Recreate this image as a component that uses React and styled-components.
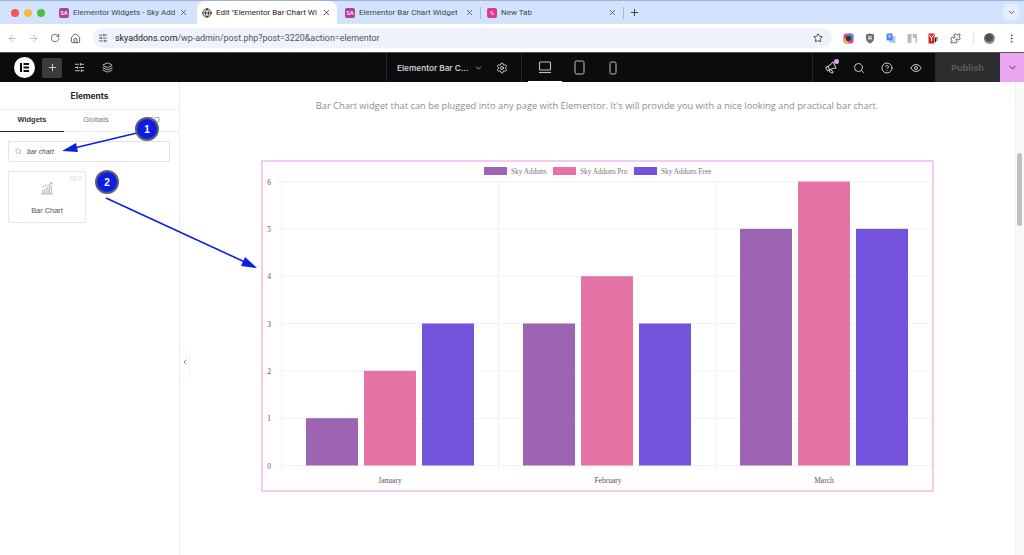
import React from "react";
import styled, { createGlobalStyle } from "styled-components";
import {
  ArrowLeft, ArrowRight, RotateCw, House, SlidersHorizontal, Star, Puzzle, EllipsisVertical, Plus, X,
  ChevronDown, Settings, Megaphone, Search, CircleHelp, Eye, Layers,
  ChevronLeft, Globe,
} from "lucide-react";

const Global = createGlobalStyle`
  html, body { margin: 0; padding: 0; background: #fff; overflow: hidden; }
  * { box-sizing: border-box; }
  #root { width: 1024px; height: 555px; }
`;

const Page = styled.div`
  position: relative;
  width: 1024px;
  height: 555px;
  overflow: hidden;
  display: flex;
  flex-direction: column;
  font-family: "Liberation Sans", Arial, sans-serif;
  background: #fff;
`;

/* ---------- browser chrome ---------- */
const TabStrip = styled.div`
  height: 24px;
  flex: none;
  display: flex;
  align-items: stretch;
  background: #d3e3fd;
  border-top: 1px solid #9fb2df;
`;
const Lights = styled.div`
  width: 53px;
  padding-left: 11px;
  display: flex;
  align-items: center;
  gap: 5px;
  flex: none;
`;
const Light = styled.span`
  width: 8px;
  height: 8px;
  border-radius: 50%;
  background: ${(p) => p.$c};
`;
const Tab = styled.div`
  width: ${(p) => p.$w}px;
  flex: none;
  display: flex;
  align-items: center;
  padding: 0 ${(p) => p.$pr || 6}px 0 ${(p) => p.$pl}px;
  gap: 4px;
  font-family: Roboto, "Liberation Sans", sans-serif;
  font-size: 8px;
  color: ${(p) => (p.$active ? "#222" : "#3f4651")};
  background: ${(p) => (p.$active ? "#fff" : "transparent")};
  border-radius: 8px 8px 0 0;
  white-space: nowrap;
`;
const TabLabel = styled.span`
  flex: 1;
  min-width: 0;
`;
const Favicon = styled.span`
  width: 10px;
  height: 10px;
  flex: none;
  border-radius: 2px;
  background: ${(p) => p.$bg};
  color: #f6d8ee;
  font-size: 6px;
  font-weight: 700;
  line-height: 10px;
  text-align: center;
`;
const TabDivider = styled.span`
  width: 1px;
  height: 12px;
  align-self: center;
  background: #a9b8d4;
  flex: none;
`;
const NewTab = styled.div`
  width: 20px;
  flex: none;
  display: flex;
  align-items: center;
  justify-content: center;
  color: #333;
`;
const StripSpacer = styled.div`
  flex: 1;
`;
const TabMenu = styled.div`
  width: 16px;
  height: 16px;
  margin: 3px 5px 0 0;
  border-radius: 5px;
  background: #e6eefc;
  display: flex;
  align-items: center;
  justify-content: center;
  color: #333;
`;
const Toolbar = styled.div`
  height: 28px;
  flex: none;
  display: flex;
  align-items: center;
  background: #fff;
  padding-left: 2px;
  color: #5f6368;
`;
const NavBtn = styled.span`
  width: ${(p) => p.$w || 21}px;
  flex: none;
  display: flex;
  align-items: center;
  justify-content: center;
  color: ${(p) => p.$c || "#555"};
`;
const Omnibox = styled.div`
  margin-left: 7px;
  width: 739px;
  height: 20px;
  flex: none;
  border-radius: 10px;
  background: #eef2fa;
  display: flex;
  align-items: center;
  padding: 0 9px 0 5px;
  gap: 7px;
  font-family: Roboto, "Liberation Sans", sans-serif;
  font-size: 8.9px;
  color: #50555c;
`;
const Domain = styled.span`
  color: #1f2226;
`;
const Url = styled.span`
  flex: 1;
`;
const Ext = styled.span`
  width: 21.3px;
  flex: none;
  display: flex;
  align-items: center;
  justify-content: center;
`;
const ToolDivider = styled.span`
  width: 1px;
  height: 11px;
  background: #dfe2e6;
  margin: 0 10px 0 7px;
  flex: none;
`;
const Avatar = styled.span`
  width: 11px;
  height: 11px;
  border-radius: 50%;
  background: radial-gradient(circle at 45% 40%, #4b4f4e 0 35%, #a3a6a5 70%);
  margin-right: 4px;
  flex: none;
`;

/* ---------- elementor bar ---------- */
const EditorBar = styled.div`
  height: 30px;
  flex: none;
  display: flex;
  align-items: stretch;
  background: #0b0c0d;
  border-top: 1px solid #555;
  color: #c9cbce;
`;
const BarLeft = styled.div`
  width: 386px;
  flex: none;
  display: flex;
  align-items: center;
  padding-left: 14px;
`;
const Logo = styled.span`
  width: 21px;
  height: 21px;
  border-radius: 50%;
  background: #fff;
  display: flex;
  align-items: center;
  justify-content: center;
  margin-right: 7px;
  flex: none;
`;
const AddBtn = styled.span`
  width: 20px;
  height: 20px;
  border-radius: 2px;
  background: #3a3b3d;
  display: flex;
  align-items: center;
  justify-content: center;
  color: #d5d6d8;
  margin-right: 7px;
`;
const BarIcon = styled.span`
  width: ${(p) => p.$w}px;
  flex: none;
  height: 100%;
  position: relative;
  display: flex;
  align-items: center;
  justify-content: center;
  color: ${(p) => p.$c || "#c9cbce"};
`;
const Tilted = styled.span`
  display: flex;
  transform: rotate(-28deg);
`;
const TitleGroup = styled.div`
  width: 136px;
  flex: none;
  display: flex;
  align-items: center;
  padding-left: 10px;
  border-left: 1px solid #26272a;
  border-right: 1px solid #26272a;
  font-family: Inter, "Liberation Sans", sans-serif;
  font-size: 8.2px;
  font-weight: 600;
  color: #c8cacc;
`;
const TitleText = styled.span`
  width: 77px;
  white-space: nowrap;
  flex: none;
`;
const Devices = styled.div`
  width: 290px;
  flex: none;
  display: flex;
  align-items: stretch;
  padding-left: 6px;
`;
const DeviceBtn = styled.span`
  width: 34px;
  flex: none;
  display: flex;
  align-items: center;
  justify-content: center;
  color: #c0c2c5;
  box-shadow: ${(p) => (p.$active ? "inset 0 -1px 0 #fff" : "none")};
`;
const BarRight = styled.div`
  flex: 1;
  display: flex;
  align-items: stretch;
  border-left: 1px solid #26272a;
  padding-left: 3px;
`;
const Dot = styled.span`
  position: absolute;
  top: 6px;
  right: 6px;
  width: 5px;
  height: 5px;
  border-radius: 50%;
  background: #e7a6ee;
`;
const Publish = styled.span`
  width: 65px;
  flex: none;
  margin-left: 5px;
  background: #2b2c2d;
  color: #5b5d5f;
  font-size: 9px;
  font-weight: 700;
  display: flex;
  align-items: center;
  justify-content: center;
`;
const PublishMenu = styled.span`
  flex: 1;
  background: #e9a6f1;
  color: #4a2a50;
  display: flex;
  align-items: center;
  justify-content: center;
`;

/* ---------- workspace ---------- */
const Workspace = styled.div`
  flex: 1;
  min-height: 0;
  display: flex;
`;
const Sidebar = styled.aside`
  width: 180px;
  flex: none;
  border-right: 1px solid #eceded;
  display: flex;
  flex-direction: column;
`;
const PanelTitle = styled.div`
  height: 28px;
  flex: none;
  display: flex;
  align-items: center;
  justify-content: center;
  font-family: Inter, "Liberation Sans", sans-serif;
  font-size: 8.4px;
  font-weight: 700;
  color: #25272a;
  border-bottom: 1px solid #f0f0f1;
`;
const PanelTabs = styled.div`
  height: 22px;
  flex: none;
  display: flex;
  border-bottom: 1px solid #eceded;
`;
const PanelTab = styled.div`
  width: ${(p) => p.$w}px;
  flex: none;
  margin-bottom: -1px;
  padding-bottom: 2px;
  display: flex;
  align-items: center;
  justify-content: center;
  font-size: 7.5px;
  font-weight: ${(p) => (p.$active ? 700 : 400)};
  color: ${(p) => (p.$active ? "#33353a" : "#777a7e")};
  border-bottom: 1px solid ${(p) => (p.$active ? "#26282b" : "transparent")};
`;
const SearchBox = styled.div`
  height: 21px;
  flex: none;
  margin: 9px 9px 9px 8px;
  border: 1px solid #e3e4e6;
  display: flex;
  align-items: center;
  gap: 5px;
  padding-left: 6px;
  font-size: 6.8px;
  font-style: italic;
  color: #44474b;
`;
const WidgetCard = styled.div`
  position: relative;
  width: 78px;
  height: 52px;
  margin-left: 8px;
  border: 1px solid #e6e7e8;
  border-radius: 2px;
  display: flex;
  flex-direction: column;
  align-items: center;
  padding-top: 9px;
  gap: 11px;
  font-size: 7.4px;
  color: #50535a;
`;
const SkyTag = styled.span`
  position: absolute;
  top: 3px;
  right: 3px;
  font-size: 6.4px;
  color: #dcdde0;
`;
const Preview = styled.main`
  position: relative;
  flex: 1;
  min-width: 0;
  padding-left: 81px;
`;
const Lead = styled.p`
  margin: 17px 0 0 -81px;
  width: 834px;
  text-align: center;
  font-family: "Open Sans", "Noto Sans", sans-serif;
  font-size: 9.3px;
  line-height: 13px;
  color: #8b8e92;
`;
const ChartFrame = styled.section`
  margin-top: 48px;
  width: 673px;
  height: 332px;
  border: 2px solid #f0cdf3;
`;
const ChartSvg = styled.svg`
  display: block;
  width: 669px;
  height: 328px;
`;
const Collapse = styled.span`
  position: absolute;
  left: 0;
  top: 263px;
  width: 9px;
  height: 33px;
  background: #fff;
  border-radius: 0 3px 3px 0;
  box-shadow: 1px 0 2px rgba(0, 0, 0, 0.05);
  display: flex;
  align-items: center;
  justify-content: center;
  color: #444;
`;
const Scrollbar = styled.div`
  position: absolute;
  right: 0;
  top: 0;
  bottom: 0;
  width: 9px;
  background: #fafafa;
  border-left: 1px solid #f0f0f0;
`;
const Thumb = styled.div`
  position: absolute;
  left: 1px;
  top: 71px;
  width: 5px;
  height: 73px;
  border-radius: 3px;
  background: #bfbfbf;
`;

/* ---------- annotations ---------- */
const Arrows = styled.svg`
  position: absolute;
  left: 0;
  top: 0;
  pointer-events: none;
`;
const Badge = styled.span`
  position: absolute;
  left: ${(p) => p.$x - 12}px;
  top: ${(p) => p.$y - 12}px;
  width: 24px;
  height: 24px;
  border-radius: 50%;
  background: #0d1ee2;
  border: 2px solid #5c6170;
  color: #fff;
  font-size: 10px;
  font-weight: 700;
  display: flex;
  align-items: center;
  justify-content: center;
`;

const ticks = [6, 5, 4, 3, 2, 1, 0];
const series = ["#9c64b2", "#e673a5", "#7352dc"];
const groups = [
  { label: "January", x: 306, values: [1, 2, 3], cx: 390 },
  { label: "February", x: 523, values: [3, 4, 3], cx: 608 },
  { label: "March", x: 740, values: [5, 6, 5], cx: 824 },
];
const legend = [
  { x: 484, label: "Sky Addons", c: series[0] },
  { x: 553, label: "Sky Addons Pro", c: series[1] },
  { x: 634, label: "Sky Addons Free", c: series[2] },
];
const yOf = (v) => 465.5 - v * 47.33;

function BarChart() {
  return (
    <ChartSvg viewBox="263 162 669 328" fontFamily="'Liberation Serif', serif">
      {ticks.map((t) => (
        <g key={t}>
          <line x1="276" x2="932" y1={yOf(t)} y2={yOf(t)} stroke="#f3f3f3" />
          <text x="271" y={yOf(t) + 3} fontSize="7.6" textAnchor="end" fill="#555">{t}</text>
        </g>
      ))}
      {[281.5, 498.5, 715.5, 931.5].map((x) => (
        <line key={x} x1={x} x2={x} y1="181" y2="470" stroke="#f3f3f3" />
      ))}
      {groups.map((g) => (
        <g key={g.label}>
          {g.values.map((v, i) => (
            <rect key={i} x={g.x + i * 58} y={yOf(v)} width="52" height={v * 47.33} fill={series[i]} />
          ))}
          <text x={g.cx} y="483" fontSize="7.5" textAnchor="middle" fill="#555">{g.label}</text>
        </g>
      ))}
      {legend.map((l) => (
        <g key={l.label}>
          <rect x={l.x} y="167" width="23" height="8" fill={l.c} />
          <text x={l.x + 27} y="173.5" fontSize="7.3" fill="#777">{l.label}</text>
        </g>
      ))}
    </ChartSvg>
  );
}

const ElementorMark = () => (
  <svg width="11" height="11" viewBox="0 0 11 11" fill="#0b0c0d">
    <rect x="1" y="1" width="2" height="9" />
    <rect x="4.5" y="1" width="5.5" height="2" />
    <rect x="4.5" y="4.5" width="5.5" height="2" />
    <rect x="4.5" y="8" width="5.5" height="2" />
  </svg>
);
const BarGlyph = () => (
  <svg width="14" height="14" viewBox="0 0 14 14" fill="none" stroke="#a9acb0" strokeWidth="0.8">
    <path d="M1 13h12M2.5 13V9h2v4M6 13V7h2v6M9.5 13V5h2v8M2 6.5 6 4l2 1 4-3.5M10 1.5h2V3.5" />
  </svg>
);
const DesktopIcon = () => (
  <svg width="14" height="13" viewBox="0 0 14 13" fill="none" stroke="currentColor" strokeWidth="1.1">
    <rect x="1.5" y="1" width="11" height="8" rx="1" />
    <path d="M1 11.5h12" />
  </svg>
);
const DeviceOutline = ({ w, h }) => (
  <svg width={w + 2} height={h + 2} viewBox={`0 0 ${w + 2} ${h + 2}`} fill="none" stroke="currentColor" strokeWidth="1">
    <rect x="1" y="1" width={w} height={h} rx="1.5" />
  </svg>
);
const RingExt = () => (
  <svg width="11" height="11" viewBox="0 0 11 11">
    <rect x=".5" y=".5" width="10" height="10" rx="2.5" fill="#d9489a" />
    <path d="M5.5.5h2.5a2.5 2.5 0 0 1 2.5 2.5v2.5h-5z" fill="#4a90e2" />
    <path d="M.5 5.5h5v5H3A2.5 2.5 0 0 1 .5 8z" fill="#f1b23c" />
    <circle cx="5.5" cy="5.5" r="2.7" fill="#33363a" />
  </svg>
);
const ShieldExt = () => (
  <svg width="10" height="11" viewBox="0 0 10 11">
    <path d="M1 1.5 5 .5l4 1v4c0 2.5-2 4-4 5-2-1-4-2.500-4-5z" fill="#6d7075" />
    <rect x="3" y="3" width="4" height="3.500" rx="1.500" fill="#e4e5e7" />
    <circle cx="4.200" cy="4.500" r=".5" fill="#555" />
    <circle cx="5.800" cy="4.500" r=".5" fill="#555" />
  </svg>
);
const TranslateExt = () => (
  <svg width="10" height="11" viewBox="0 0 10 11">
    <rect x="3.500" y="3" width="6" height="7" rx="1" fill="#b7c9ec" />
    <rect x=".5" y=".5" width="6" height="7" rx="1" fill="#4a86e8" />
    <path d="M2 3h3M3.500 2.500v3" stroke="#fff" strokeWidth=".7" />
  </svg>
);
const BookExt = () => (
  <svg width="11" height="11" viewBox="0 0 11 11" fill="#b9bbbd">
    <rect x=".5" y="1" width="4" height="9" />
    <rect x="6" y="1" width="4" height="4" />
    <rect x="8.500" y="5" width="1.500" height="5" />
    <rect x="4.500" y="1" width="1.500" height="2" fill="#dedfe0" />
  </svg>
);
const RedExt = () => (
  <svg width="11" height="11" viewBox="0 0 11 11">
    <rect x=".5" y=".5" width="6" height="10" fill="#d8202a" />
    <path d="M1.500 2 3.500 5v3M5.500 2 3.500 5" stroke="#fff" strokeWidth="1" fill="none" />
    <path d="M7.500 4.500V9M7.500 5H10M7.500 7h2" stroke="#222" strokeWidth="1" fill="none" />
  </svg>
);

export default function App() {
  return (
    <Page>
      <Global />
      <TabStrip>
        <Lights>
          <Light $c="#ee5a52" />
          <Light $c="#f4b93e" />
          <Light $c="#4cc13f" />
        </Lights>
        <Tab $w={144} $pl={6} $pr={9}>
          <Favicon $bg="#b0409a">SA</Favicon>
          <TabLabel>Elementor Widgets - Sky Add</TabLabel>
          <X size={9} />
        </Tab>
        <Tab $w={140} $pl={5} $active>
          <Globe size={10} />
          <TabLabel>Edit "Elementor Bar Chart Wi</TabLabel>
          <X size={9} />
        </Tab>
        <Tab $w={143} $pl={8}>
          <Favicon $bg="#b0409a">SA</Favicon>
          <TabLabel>Elementor Bar Chart Widget</TabLabel>
          <X size={9} />
        </Tab>
        <TabDivider />
        <Tab $w={142} $pl={6}>
          <Favicon $bg="#e0388f">%</Favicon>
          <TabLabel>New Tab</TabLabel>
          <X size={9} />
        </Tab>
        <TabDivider />
        <NewTab><Plus size={11} /></NewTab>
        <StripSpacer />
        <TabMenu><ChevronDown size={9} /></TabMenu>
      </TabStrip>
      <Toolbar>
        <NavBtn $c="#b4b7bb"><ArrowLeft size={11} /></NavBtn>
        <NavBtn $c="#b4b7bb"><ArrowRight size={11} /></NavBtn>
        <NavBtn><RotateCw size={10} /></NavBtn>
        <NavBtn><House size={11} /></NavBtn>
        <Omnibox>
          <SlidersHorizontal size={10} />
          <Url><Domain>skyaddons.com</Domain>/wp-admin/post.php?post=3220&action=elementor</Url>
          <Star size={10} color="#333" />
        </Omnibox>
        <NavBtn $w={6} />
        <Ext><RingExt /></Ext>
        <Ext><ShieldExt /></Ext>
        <Ext><TranslateExt /></Ext>
        <Ext><BookExt /></Ext>
        <Ext><RedExt /></Ext>
        <Ext><Puzzle size={11} color="#444" /></Ext>
        <ToolDivider />
        <Avatar />
        <NavBtn $c="#444" $w={26}><EllipsisVertical size={11} /></NavBtn>
      </Toolbar>
      <EditorBar>
        <BarLeft>
          <Logo><ElementorMark /></Logo>
          <AddBtn><Plus size={11} /></AddBtn>
          <BarIcon $w={20}><SlidersHorizontal size={11} /></BarIcon>
          <BarIcon $w={36}><Layers size={11} /></BarIcon>
        </BarLeft>
        <TitleGroup>
          <TitleText>Elementor Bar C...</TitleText>
          <ChevronDown size={10} />
          <BarIcon $w={38}><Settings size={12} /></BarIcon>
        </TitleGroup>
        <Devices>
          <DeviceBtn $active><DesktopIcon /></DeviceBtn>
          <DeviceBtn><DeviceOutline w={9} h={13} /></DeviceBtn>
          <DeviceBtn><DeviceOutline w={6} h={12} /></DeviceBtn>
        </Devices>
        <BarRight>
          <BarIcon $w={29}><Tilted><Megaphone size={12} /></Tilted><Dot /></BarIcon>
          <BarIcon $w={27}><Search size={12} /></BarIcon>
          <BarIcon $w={29}><CircleHelp size={12} /></BarIcon>
          <BarIcon $w={29}><Eye size={12} /></BarIcon>
          <Publish>Publish</Publish>
          <PublishMenu><ChevronDown size={11} /></PublishMenu>
        </BarRight>
      </EditorBar>
      <Workspace>
        <Sidebar>
          <PanelTitle>Elements</PanelTitle>
          <PanelTabs>
            <PanelTab $w={64} $active>Widgets</PanelTab>
            <PanelTab $w={64}>Globals</PanelTab>
            <PanelTab $w={48}>SEO</PanelTab>
          </PanelTabs>
          <SearchBox>
            <Search size={7} color="#9a9da1" />
            bar chart
          </SearchBox>
          <WidgetCard>
            <SkyTag>SKY</SkyTag>
            <BarGlyph />
            Bar Chart
          </WidgetCard>
        </Sidebar>
        <Preview>
          <Lead>Bar Chart widget that can be plugged into any page with Elementor. It's will provide you with a nice looking and practical bar chart.</Lead>
          <ChartFrame><BarChart /></ChartFrame>
          <Collapse><ChevronLeft size={8} /></Collapse>
          <Scrollbar><Thumb /></Scrollbar>
        </Preview>
      </Workspace>
      <Arrows width="1024" height="555" viewBox="0 0 1024 555">
        <path d="M137 133 70 149" stroke="#0d1ee2" strokeWidth="1.6" fill="none" />
        <path d="M62 151 76 143 78 152Z" fill="#0d1ee2" />
        <path d="M106 198 247 263" stroke="#0d1ee2" strokeWidth="1.6" fill="none" />
        <path d="M257 268 241 266 245 257Z" fill="#0d1ee2" />
      </Arrows>
      <Badge $x={147} $y={129}>1</Badge>
      <Badge $x={107} $y={182}>2</Badge>
    </Page>
  );
}
